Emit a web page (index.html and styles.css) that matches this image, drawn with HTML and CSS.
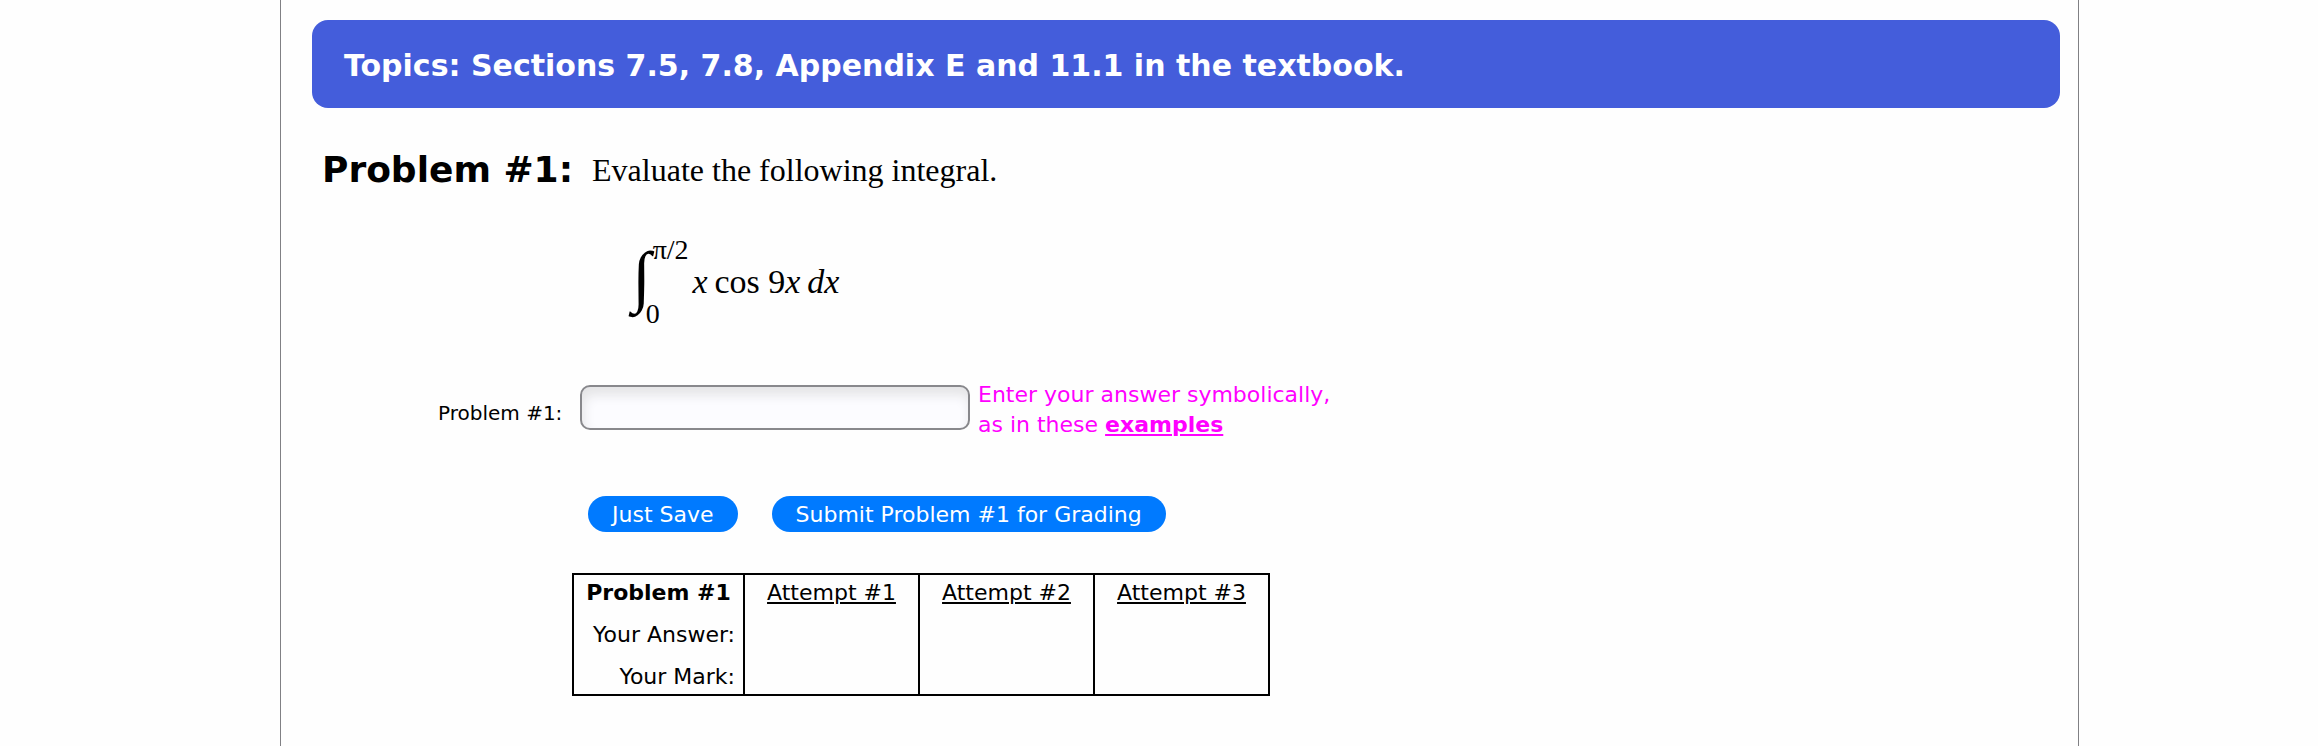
FILE: index.html
```
<!DOCTYPE html>
<html lang="en">
<head>
    <meta charset="UTF-8">
    <meta name="viewport" content="width=device-width, initial-scale=1.0">
    <title>Problem #1</title>
    <link rel="stylesheet" href="styles.css">
</head>
<body>
  <div class="page">
    <h1 class="topics">Topics: Sections 7.5, 7.8, Appendix E and 11.1 in the textbook.</h1>

    <div class="question">
      <h2>Problem #1:</h2>
      <p>Evaluate the following integral.</p>
    </div>

    <div class="formula">
      <span class="integral">∫</span>
      <span class="limits"><span class="upper">π/2</span><span>0</span></span>
      <span><i>x</i>&thinsp;cos 9<i>x</i>&thinsp;<i>dx</i></span>
    </div>

    <form>
      <div class="answer">
        <label for="answer1">Problem #1:</label>
        <input type="text" id="answer1" name="answer1">
        <p class="hint">Enter your answer symbolically,<br>as in these <a href="#">examples</a></p>
      </div>
      <div class="buttons">
        <button type="button">Just Save</button>
        <button type="submit">Submit Problem #1 for Grading</button>
      </div>
    </form>

    <table class="attempts">
      <tr>
        <th class="name">Problem #1</th>
        <th>Attempt #1</th>
        <th>Attempt #2</th>
        <th>Attempt #3</th>
      </tr>
      <tr>
        <td>Your Answer:</td>
        <td></td>
        <td></td>
        <td></td>
      </tr>
      <tr>
        <td>Your Mark:</td>
        <td></td>
        <td></td>
        <td></td>
      </tr>
    </table>
  </div>
</body>
</html>
```
FILE: styles.css
```
*{
    margin: 0;
    padding: 0;
    box-sizing: border-box;
}
body{
    background-color: #fefefe;
    color: #000;
    font-family: Verdana, "DejaVu Sans", sans-serif;
    font-size: 22px;
}
.page{
    min-height: 100vh;
    margin: 0 239px 0 280px;
    padding: 20px 18px 0 31px;
    border-left: 1px solid #808084;
    border-right: 1px solid #808084;
}
.topics{
    padding: 26px 32px 22px;
    border-radius: 16px;
    background-color: #445ddb;
    color: #fff;
    font-size: 30px;
    line-height: 40px;
}
.question{
    display: flex;
    align-items: center;
    gap: 19px;
    margin-top: 40px;
    padding-left: 10px;
}
.question h2{
    font-size: 36px;
    line-height: 44px;
}
.question p{
    font-family: "Times New Roman", "Liberation Serif", serif;
    font-size: 32px;
}
.formula{
    display: flex;
    align-items: center;
    margin: 44px 0 0 320px;
    height: 92px;
    font-family: "Times New Roman", "Liberation Serif", serif;
    font-size: 34px;
    line-height: 40px;
}
.integral{
    align-self: flex-start;
    margin-right: -5px;
    font-size: 68px;
    line-height: 80px;
}
.limits{
    display: flex;
    flex-direction: column;
    justify-content: space-between;
    height: 92px;
    margin-right: 4px;
    font-size: 28px;
    line-height: 28px;
}
.upper{
    padding-left: 7px;
}
.answer{
    display: flex;
    align-items: center;
    margin-top: 46px;
    padding-left: 126px;
}
.answer label{
    width: 142px;
    padding-top: 12px;
    font-size: 20px;
}
.answer input{
    width: 390px;
    height: 45px;
    padding: 0 12px;
    border: 2px solid #88888c;
    border-radius: 10px;
    background-color: #fcfcff;
    box-shadow: inset 2px 8px 12px #e4e4e6;
    font-size: 22px;
}
.hint{
    margin-left: 8px;
    padding-top: 6px;
    color: #f0f;
    line-height: 30px;
}
.hint a{
    color: #f0f;
    font-weight: bold;
}
.buttons{
    display: flex;
    gap: 34px;
    margin: 56px 0 0 276px;
}
.buttons button{
    height: 36px;
    padding: 0 24px;
    border: none;
    border-radius: 18px;
    background-color: #007aff;
    color: #fff;
    font-family: inherit;
    font-size: 22px;
}
.attempts{
    margin: 41px 0 0 260px;
    border: 2px solid #000;
    border-collapse: collapse;
}
.attempts th,
.attempts td{
    width: 175px;
    padding: 6px 8px;
    border-left: 2px solid #000;
    line-height: 30px;
    text-align: right;
}
.attempts th{
    padding-top: 3px;
    font-weight: normal;
    text-align: center;
    text-decoration: underline;
}
.attempts tr:last-child td{
    padding-bottom: 2px;
}
.attempts td:first-child,
.attempts .name{
    width: 171px;
}
.attempts .name{
    font-weight: bold;
    text-decoration: none;
}
```
